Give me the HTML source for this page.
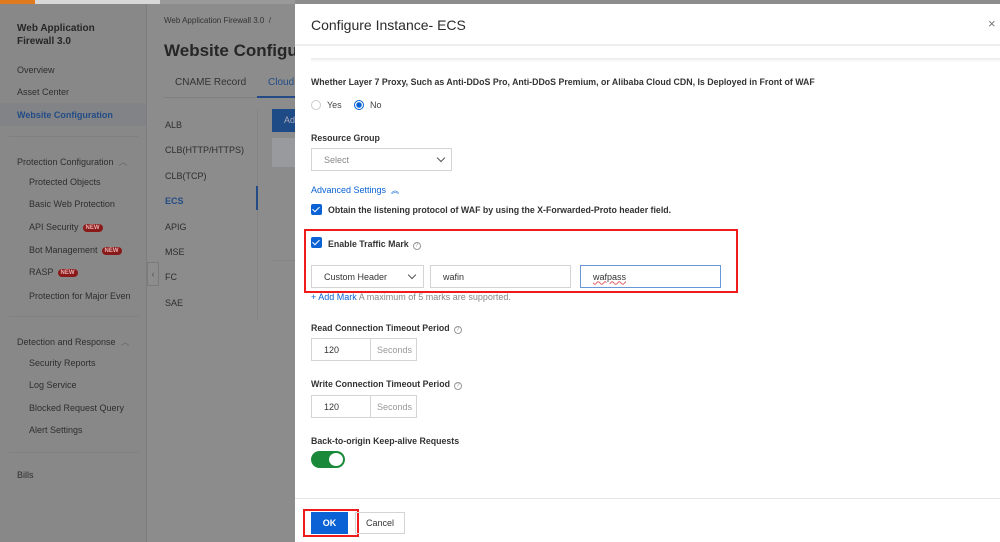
<!DOCTYPE html>
<html><head><meta charset="utf-8"><style>
*{margin:0;padding:0;box-sizing:border-box}
body{width:1000px;height:542px;overflow:hidden;position:relative;background:#8c8c8c;font-family:"Liberation Sans",sans-serif;color:#2b2b2b}
.a{position:absolute;white-space:nowrap}
.side{position:absolute;left:0;top:4px;width:147px;height:538px;background:#888;border-right:1px solid #7d7d7d}
.s{font-size:9px;color:#2e2e2e}
.new{display:inline-block;background:#8a1a1a;color:#e8b0b0;font-size:6px;font-weight:bold;border-radius:6px;padding:1px 3px;margin-left:4px;vertical-align:1px}
.modal{position:absolute;left:295px;top:4px;width:705px;height:538px;background:#fff}
.l{font-size:8.8px;font-weight:bold;color:#333}
.inp{position:absolute;border:1px solid #d4d4d4;background:#fff;font-size:9px;color:#333;padding-left:12px;display:flex;align-items:center}
.cb{position:absolute;width:11px;height:11px;background:#0a62d4;border-radius:2px}
.cb:after{content:"";position:absolute;left:3px;top:1px;width:3px;height:6px;border:solid #fff;border-width:0 1.5px 1.5px 0;transform:rotate(45deg)}
.q{display:inline-block;width:8px;height:8px;border:1px solid #999;border-radius:50%;font-size:6px;color:#999;text-align:center;line-height:6px;margin-left:4px;vertical-align:0;font-weight:normal}
.chev{position:absolute;width:6px;height:6px;border:solid #555;border-width:0 1.2px 1.2px 0;transform:rotate(45deg)}
</style></head><body>
<div class="a" style="left:0;top:0;width:35px;height:4px;background:#e07a1f"></div>
<div class="a" style="left:35px;top:0;width:125px;height:4px;background:#d8d8d8"></div>
<div class="a" style="left:160px;top:0;width:135px;height:4px;background:#9a9a9a"></div>
<div class="side"></div>
<div class="a" style="left:17px;top:22px;font-size:10px;font-weight:bold;color:#262626;line-height:13px">Web Application<br>Firewall 3.0</div>
<div class="a s" style="left:17px;top:65px">Overview</div>
<div class="a s" style="left:17px;top:87px">Asset Center</div>
<div class="a" style="left:0;top:103px;width:146px;height:23px;background:#818387"></div>
<div class="a" style="left:17px;top:110px;font-size:9px;font-weight:bold;color:#234c86">Website Configuration</div>
<div class="a" style="left:9px;top:136px;width:129px;height:1px;background:#808080"></div>
<div class="a s" style="left:17px;top:155px">Protection Configuration &nbsp;<span style="color:#666">︿</span></div>
<div class="a s" style="left:29px;top:177px">Protected Objects</div>
<div class="a s" style="left:29px;top:199px">Basic Web Protection</div>
<div class="a s" style="left:29px;top:222px">API Security<span class="new">NEW</span></div>
<div class="a s" style="left:29px;top:245px">Bot Management<span class="new">NEW</span></div>
<div class="a s" style="left:29px;top:267px">RASP<span class="new">NEW</span></div>
<div class="a s" style="left:29px;top:291px">Protection for Major Even</div>
<div class="a" style="left:9px;top:316px;width:129px;height:1px;background:#808080"></div>
<div class="a s" style="left:17px;top:335px">Detection and Response &nbsp;<span style="color:#666">︿</span></div>
<div class="a s" style="left:29px;top:358px">Security Reports</div>
<div class="a s" style="left:29px;top:380px">Log Service</div>
<div class="a s" style="left:29px;top:403px">Blocked Request Query</div>
<div class="a s" style="left:29px;top:425px">Alert Settings</div>
<div class="a" style="left:9px;top:452px;width:129px;height:1px;background:#808080"></div>
<div class="a s" style="left:17px;top:470px">Bills</div>
<div class="a" style="left:147px;top:262px;width:12px;height:24px;border:1px solid #7a7a7a;background:#8d8d8d;font-size:9px;color:#555;text-align:center;line-height:22px">‹</div>
<div class="a" style="left:164px;top:16px;font-size:8px;color:#333">Web Application Firewall 3.0 &nbsp;/</div>
<div class="a" style="left:164px;top:41px;font-size:17px;font-weight:bold;color:#262626">Website Configu</div>
<div class="a" style="left:175px;top:77px;font-size:10px;color:#333">CNAME Record</div>
<div class="a" style="left:268px;top:77px;font-size:10px;color:#234c86">Cloud</div>
<div class="a" style="left:164px;top:97px;width:131px;height:1px;background:#7f7f7f"></div>
<div class="a" style="left:257px;top:96px;width:38px;height:2px;background:#234c86"></div>
<div class="a" style="left:257px;top:110px;width:1px;height:210px;background:#848484"></div>
<div class="a" style="left:256px;top:186px;width:2px;height:24px;background:#234c86"></div>
<div class="a" style="left:272px;top:109px;width:23px;height:23px;background:#1e4a85;color:#aab;font-size:9px;padding:6px 0 0 12px">Ad</div>
<div class="a" style="left:272px;top:138px;width:23px;height:29px;background:#999a9e"></div>
<div class="a" style="left:272px;top:260px;width:23px;height:1px;background:#848484"></div>
<div class="a s" style="left:165px;top:120px">ALB</div>
<div class="a s" style="left:165px;top:145px">CLB(HTTP/HTTPS)</div>
<div class="a s" style="left:165px;top:171px">CLB(TCP)</div>
<div class="a" style="left:165px;top:196px;font-size:9px;font-weight:bold;color:#234c86">ECS</div>
<div class="a s" style="left:165px;top:222px">APIG</div>
<div class="a s" style="left:165px;top:247px">MSE</div>
<div class="a s" style="left:165px;top:272px">FC</div>
<div class="a s" style="left:165px;top:298px">SAE</div>

<div class="modal"></div>
<div class="a" style="left:295px;top:44px;width:705px;height:2px;background:#eee"></div>
<div class="a" style="left:311px;top:58px;width:689px;height:4px;background:linear-gradient(#eaeaea,#fff)"></div>
<div class="a" style="left:311px;top:17px;font-size:14px;color:#2b2b2b">Configure Instance- ECS</div>
<div class="a" style="left:988px;top:16px;font-size:13px;color:#777">×</div>
<div class="a l" style="left:311px;top:77px">Whether Layer 7 Proxy, Such as Anti-DDoS Pro, Anti-DDoS Premium, or Alibaba Cloud CDN, Is Deployed in Front of WAF</div>
<div class="a" style="left:311px;top:100px;width:10px;height:10px;border:1px solid #ccc;border-radius:50%"></div>
<div class="a" style="left:327px;top:100px;font-size:9px;color:#444">Yes</div>
<div class="a" style="left:354px;top:100px;width:10px;height:10px;border:1px solid #0a62d4;border-radius:50%;background:radial-gradient(#0a62d4 2.5px,#fff 3px)"></div>
<div class="a" style="left:370px;top:100px;font-size:9px;color:#444">No</div>
<div class="a l" style="left:311px;top:133px">Resource Group</div>
<div class="inp" style="left:311px;top:148px;width:141px;height:23px;color:#888">Select</div>
<div class="chev" style="left:438px;top:155px"></div>
<div class="a" style="left:311px;top:185px;font-size:9px;color:#0a62d4">Advanced Settings &nbsp;<span style="font-size:8px">︽</span></div>
<div class="cb" style="left:311px;top:204px"></div>
<div class="a l" style="left:328px;top:205px">Obtain the listening protocol of WAF by using the X-Forwarded-Proto header field.</div>
<div class="a" style="left:304px;top:229px;width:434px;height:64px;border:2px solid #f01c1c"></div>
<div class="cb" style="left:311px;top:237px"></div>
<div class="a l" style="left:328px;top:239px">Enable Traffic Mark<span class="q">?</span></div>
<div class="inp" style="left:311px;top:265px;width:113px;height:23px">Custom Header</div>
<div class="chev" style="left:409px;top:272px"></div>
<div class="inp" style="left:430px;top:265px;width:141px;height:23px">wafin</div>
<div class="inp" style="left:580px;top:265px;width:141px;height:23px;border-color:#6a98d6"><span style="text-decoration:underline wavy #e06060;text-decoration-thickness:1px">wafpass</span></div>
<div class="a" style="left:311px;top:292px;font-size:9px;color:#888"><span style="color:#0a62d4">+ Add Mark</span> A maximum of 5 marks are supported.</div>
<div class="a l" style="left:311px;top:323px">Read Connection Timeout Period<span class="q">?</span></div>
<div class="inp" style="left:311px;top:338px;width:60px;height:23px">120</div>
<div class="inp" style="left:370px;top:338px;width:47px;height:23px;color:#999;padding-left:6px">Seconds</div>
<div class="a l" style="left:311px;top:379px">Write Connection Timeout Period<span class="q">?</span></div>
<div class="inp" style="left:311px;top:395px;width:60px;height:23px">120</div>
<div class="inp" style="left:370px;top:395px;width:47px;height:23px;color:#999;padding-left:6px">Seconds</div>
<div class="a l" style="left:311px;top:436px">Back-to-origin Keep-alive Requests</div>
<div class="a" style="left:311px;top:451px;width:34px;height:17px;border-radius:9px;background:#1a8a3a"></div>
<div class="a" style="left:329px;top:453px;width:14px;height:13px;border-radius:50%;background:#fff"></div>
<div class="a" style="left:295px;top:498px;width:705px;height:1px;background:#e6e6e6"></div>
<div class="a" style="left:311px;top:512px;width:37px;height:22px;background:#0a62d4;color:#fff;font-size:9px;font-weight:bold;text-align:center;line-height:22px">OK</div>
<div class="a" style="left:303px;top:509px;width:56px;height:28px;border:2px solid #f01c1c"></div>
<div class="a" style="left:355px;top:512px;width:50px;height:22px;border:1px solid #d4d4d4;font-size:9px;text-align:center;line-height:20px;color:#333">Cancel</div>
</body></html>
